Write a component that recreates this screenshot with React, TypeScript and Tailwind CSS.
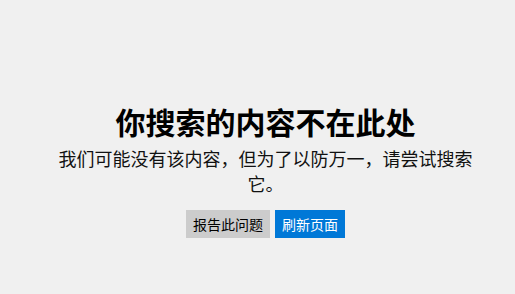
export default function App() {
  return (
    <div
      className="w-[515px] h-[294px] bg-[#f0f0f0] flex flex-col items-center pt-[101px] pl-[16px]"
      style={{ fontFamily: '"Noto Sans CJK SC", sans-serif' }}
    >
      <h1 className="text-[30px] leading-[40px] font-bold text-black">你搜索的内容不在此处</h1>
      <p className="mt-[5px] w-[430px] text-center text-[18px] leading-[25px] text-[#111]">
        我们可能没有该内容，但为了以防万一，请尝试搜索它。
      </p>
      <div className="mt-[14px] flex gap-[5px]">
        <button className="h-[28px] px-[7px] bg-[#cccccc] text-[14px] text-black">报告此问题</button>
        <button className="h-[28px] px-[7px] bg-[#0078d7] text-[14px] text-white">刷新页面</button>
      </div>
    </div>
  );
}
